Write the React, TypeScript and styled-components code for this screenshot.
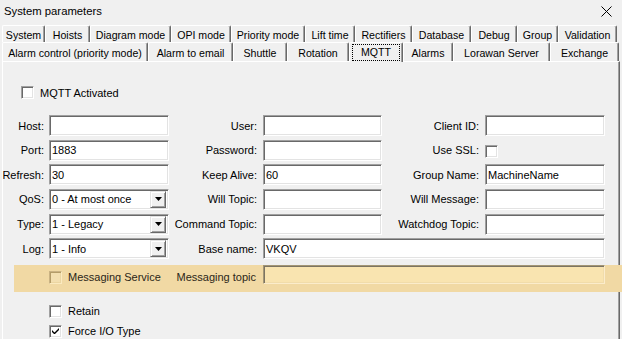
import React from 'react';
import styled, { createGlobalStyle, css } from 'styled-components';

const GlobalStyle = createGlobalStyle`
    body {
        margin: 0;
        background: #f0f0f0;
        font-family: "Liberation Sans", Arial, sans-serif;
        font-size: 11px;
        color: #000;
    }
`;

const sunken = css`
    border: 1px solid;
    border-color: #a0a0a0 #ffffff #ffffff #a0a0a0;
    box-shadow: inset 1px 1px 0 #696969, inset -1px -1px 0 #e3e3e3;
`;

const Window = styled.div`
    width: 622px;
    height: 339px;
    overflow: hidden;
    background: #f0f0f0;
    display: flex;
    flex-direction: column;
`;

const TitleBar = styled.div`
    height: 22px;
    display: flex;
    align-items: center;
    justify-content: space-between;
    padding: 0 10px 0 4px;
    font-size: 11.3px;
    color: #000;
`;

const CloseIcon = () => (
    <svg width="11" height="11" viewBox="0 0 11 11">
        <path d="M0.5 0.5 L10.5 10.5 M10.5 0.5 L0.5 10.5" stroke="#000" strokeWidth="1" fill="none" />
    </svg>
);

const TabStrip = styled.div`
    margin-top: 3px;
    padding-left: 2px;
    display: flex;
    flex-direction: column;
    font-size: 10.6px;
`;

const TabRow = styled.div<{ $h: number }>`
    display: flex;
    height: ${p => p.$h}px;
`;

const Tab = styled.div<{ $w: number; $selected?: boolean }>`
    box-sizing: border-box;
    width: ${p => p.$w}px;
    height: 100%;
    display: flex;
    align-items: center;
    justify-content: center;
    padding-top: 1px;
    white-space: nowrap;
    background: #f0f0f0;
    border-top: 1px solid #ffffff;
    border-left: 1px solid #ffffff;
    border-right: 1px solid #696969;
    box-shadow: inset -1px 0 0 #a0a0a0;
    border-top-left-radius: 2px;
    border-top-right-radius: 2px;
    ${p => p.$selected && css`
        position: relative;
        z-index: 1;
        height: 20px;
        margin-bottom: -1px;
        padding-top: 0;
        align-items: stretch;
    `}
`;

const FocusLabel = styled.span`
    flex: 1;
    margin: 1px 2px 1px 2px;
    border: 1px dotted #000;
    display: flex;
    justify-content: center;
    align-items: center;
    padding-bottom: 2px;
`;

const Panel = styled.div`
    margin-left: 2px;
    width: 618px;
    box-sizing: border-box;
    flex: 1;
    border-top: 1px solid #ffffff;
    border-left: 1px solid #ffffff;
    border-right: 1px solid #696969;
    box-shadow: inset -1px 0 0 #a0a0a0;
    display: flex;
    flex-direction: column;
`;

const CheckRow = styled.label<{ $indent: number; $top: number }>`
    display: flex;
    align-items: center;
    gap: 6px;
    height: 13px;
    margin-left: ${p => p.$indent}px;
    margin-top: ${p => p.$top}px;
`;

const Box = styled.span<{ $disabled?: boolean }>`
    box-sizing: border-box;
    width: 13px;
    height: 13px;
    flex: none;
    display: inline-flex;
    align-items: center;
    justify-content: center;
    background: #fff;
    ${sunken}
    ${p => p.$disabled && css`
        background: #f3dfb0;
        border-color: #c9b283 #fbeac0 #fbeac0 #c9b283;
        box-shadow: inset 1px 1px 0 #b49c68, inset -1px -1px 0 #ecd6a2;
    `}
`;

const CheckBox = ({ checked, disabled }: { checked?: boolean; disabled?: boolean }) => (
    <Box $disabled={disabled}>
        {checked && (
            <svg width="7" height="7" viewBox="0 0 7 7">
                <path d="M0 2 L0 4 L2 6 L3 6 L7 2 L7 0 L2.5 4.5 Z" fill="#000" />
            </svg>
        )}
    </Box>
);

const FormGrid = styled.div`
    margin-top: 16px;
    display: grid;
    grid-template-columns: 46px 120px 94px 119px 103px 120px;
    grid-auto-rows: 21px;
    row-gap: 3.67px;
`;

const Label = styled.div<{ $pad: number }>`
    display: flex;
    align-items: center;
    justify-content: flex-end;
    padding-right: ${p => p.$pad}px;
    white-space: nowrap;
`;

const Input = styled.div<{ $span?: number }>`
    box-sizing: border-box;
    height: 21px;
    background: #fff;
    ${sunken}
    display: flex;
    align-items: center;
    padding-left: 2px;
    white-space: nowrap;
    ${p => p.$span && css`grid-column: span ${p.$span};`}
`;

const Combo = styled(Input)`
    padding-right: 2px;
    justify-content: space-between;
`;

const ComboButton = styled.span`
    box-sizing: border-box;
    width: 16px;
    height: 17px;
    background: #f0f0f0;
    border: 1px solid;
    border-color: #e3e3e3 #696969 #696969 #e3e3e3;
    box-shadow: inset 1px 1px 0 #fff, inset -1px -1px 0 #a0a0a0;
    display: flex;
    align-items: center;
    justify-content: center;
`;

const Arrow = () => (
    <svg width="7" height="4" viewBox="0 0 7 4">
        <path d="M0 0 H7 L3.5 4 Z" fill="#000" />
    </svg>
);

const SslCell = styled.div`
    display: flex;
    align-items: center;
    padding-top: 3px;
`;

const Band = styled.div`
    margin: 5.7px -4px 0 11px;
    height: 27px;
    background: #f1d9a4;
    display: grid;
    grid-template-columns: 249px 342px;
    align-items: start;
`;

const BandLeft = styled.div`
    height: 24px;
    display: flex;
    align-items: center;
    justify-content: space-between;
    padding: 0 7px 0 35px;
    color: #2b2618;
`;

const BandCheck = styled.span`
    display: flex;
    align-items: center;
    gap: 6px;
    padding-top: 1px;
`;

const BandInput = styled.div`
    box-sizing: border-box;
    height: 19px;
    background: #f9e4b0;
    border: 1px solid;
    border-color: #a39676 #fbeccb #fbeccb #a39676;
    box-shadow: inset 1px 1px 0 #7c7462, inset -1px -1px 0 #f1dcaa;
`;

const tabsTop = [
    { t: 'System', w: 43 },
    { t: 'Hoists', w: 45 },
    { t: 'Diagram mode', w: 81 },
    { t: 'OPI mode', w: 60 },
    { t: 'Priority mode', w: 74 },
    { t: 'Lift time', w: 50 },
    { t: 'Rectifiers', w: 57 },
    { t: 'Database', w: 59 },
    { t: 'Debug', w: 46 },
    { t: 'Group', w: 41 },
    { t: 'Validation', w: 59 },
];

const tabsBottom = [
    { t: 'Alarm control (priority mode)', w: 146 },
    { t: 'Alarm to email', w: 85 },
    { t: 'Shuttle', w: 54 },
    { t: 'Rotation', w: 62 },
    { t: 'MQTT', w: 54, selected: true },
    { t: 'Alarms', w: 50 },
    { t: 'Lorawan Server', w: 97 },
    { t: 'Exchange', w: 69 },
];

export default function App() {
    return (
        <Window>
            <GlobalStyle />
            <TitleBar>
                <span>System parameters</span>
                <CloseIcon />
            </TitleBar>

            <TabStrip>
                <TabRow $h={17}>
                    {tabsTop.map(tab => <Tab key={tab.t} $w={tab.w}>{tab.t}</Tab>)}
                </TabRow>
                <TabRow $h={19}>
                    {tabsBottom.map(tab => (
                        <Tab key={tab.t} $w={tab.w} $selected={tab.selected}>
                            {tab.selected ? <FocusLabel>{tab.t}</FocusLabel> : tab.t}
                        </Tab>
                    ))}
                </TabRow>
            </TabStrip>

            <Panel>
                <CheckRow $indent={18} $top={24}>
                    <CheckBox />
                    <span>MQTT Activated</span>
                </CheckRow>

                <FormGrid>
                    <Label $pad={5}>Host:</Label>
                    <Input />
                    <Label $pad={6}>User:</Label>
                    <Input />
                    <Label $pad={6}>Client ID:</Label>
                    <Input />

                    <Label $pad={5}>Port:</Label>
                    <Input>1883</Input>
                    <Label $pad={6}>Password:</Label>
                    <Input />
                    <Label $pad={6}>Use SSL:</Label>
                    <SslCell><CheckBox /></SslCell>

                    <Label $pad={5}>Refresh:</Label>
                    <Input>30</Input>
                    <Label $pad={6}>Keep Alive:</Label>
                    <Input>60</Input>
                    <Label $pad={6}>Group Name:</Label>
                    <Input>MachineName</Input>

                    <Label $pad={5}>QoS:</Label>
                    <Combo>0 - At most once<ComboButton><Arrow /></ComboButton></Combo>
                    <Label $pad={6}>Will Topic:</Label>
                    <Input />
                    <Label $pad={6}>Will Message:</Label>
                    <Input />

                    <Label $pad={5}>Type:</Label>
                    <Combo>1 - Legacy<ComboButton><Arrow /></ComboButton></Combo>
                    <Label $pad={6}>Command Topic:</Label>
                    <Input />
                    <Label $pad={6}>Watchdog Topic:</Label>
                    <Input />

                    <Label $pad={5}>Log:</Label>
                    <Combo>1 - Info<ComboButton><Arrow /></ComboButton></Combo>
                    <Label $pad={6}>Base name:</Label>
                    <Input $span={3}>VKQV</Input>
                </FormGrid>

                <Band>
                    <BandLeft>
                        <BandCheck>
                            <CheckBox disabled />
                            <span>Messaging Service</span>
                        </BandCheck>
                        <span>Messaging topic</span>
                    </BandLeft>
                    <BandInput />
                </Band>

                <CheckRow $indent={46} $top={13}>
                    <CheckBox />
                    <span>Retain</span>
                </CheckRow>
                <CheckRow $indent={46} $top={7}>
                    <CheckBox checked />
                    <span>Force I/O Type</span>
                </CheckRow>
            </Panel>
        </Window>
    );
}
